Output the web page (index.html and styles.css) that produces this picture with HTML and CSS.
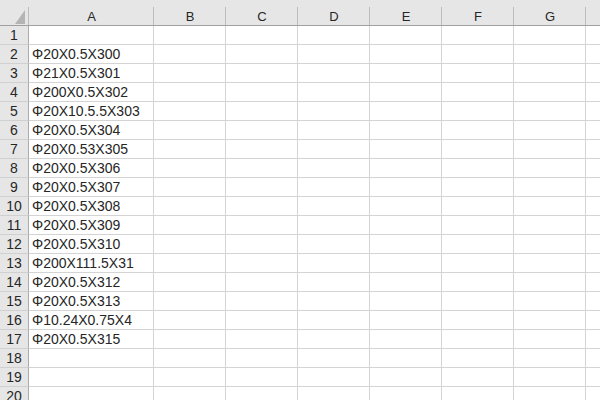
FILE: index.html
```html
<!DOCTYPE html>
<html>
<head>
<meta charset="utf-8">
<link rel="stylesheet" href="styles.css">
</head>
<body>
<div class="sheet">
  <div class="hrow">
    <div class="corner"><svg width="29" height="26" viewBox="0 0 29 26"><polygon points="25,10 25,24 15,24" fill="#b4b4b4"/></svg></div>
    <div class="ch a">A</div><div class="ch">B</div><div class="ch">C</div><div class="ch">D</div><div class="ch">E</div><div class="ch">F</div><div class="ch">G</div><div class="ch">H</div>
  </div>
  <div class="row"><div class="rh">1</div><div class="c a"></div><div class="c"></div><div class="c"></div><div class="c"></div><div class="c"></div><div class="c"></div><div class="c"></div><div class="c"></div></div>
  <div class="row"><div class="rh">2</div><div class="c a">Φ20X0.5X300</div><div class="c"></div><div class="c"></div><div class="c"></div><div class="c"></div><div class="c"></div><div class="c"></div><div class="c"></div></div>
  <div class="row"><div class="rh">3</div><div class="c a">Φ21X0.5X301</div><div class="c"></div><div class="c"></div><div class="c"></div><div class="c"></div><div class="c"></div><div class="c"></div><div class="c"></div></div>
  <div class="row"><div class="rh">4</div><div class="c a">Φ200X0.5X302</div><div class="c"></div><div class="c"></div><div class="c"></div><div class="c"></div><div class="c"></div><div class="c"></div><div class="c"></div></div>
  <div class="row"><div class="rh">5</div><div class="c a">Φ20X10.5.5X303</div><div class="c"></div><div class="c"></div><div class="c"></div><div class="c"></div><div class="c"></div><div class="c"></div><div class="c"></div></div>
  <div class="row"><div class="rh">6</div><div class="c a">Φ20X0.5X304</div><div class="c"></div><div class="c"></div><div class="c"></div><div class="c"></div><div class="c"></div><div class="c"></div><div class="c"></div></div>
  <div class="row"><div class="rh">7</div><div class="c a">Φ20X0.53X305</div><div class="c"></div><div class="c"></div><div class="c"></div><div class="c"></div><div class="c"></div><div class="c"></div><div class="c"></div></div>
  <div class="row"><div class="rh">8</div><div class="c a">Φ20X0.5X306</div><div class="c"></div><div class="c"></div><div class="c"></div><div class="c"></div><div class="c"></div><div class="c"></div><div class="c"></div></div>
  <div class="row"><div class="rh">9</div><div class="c a">Φ20X0.5X307</div><div class="c"></div><div class="c"></div><div class="c"></div><div class="c"></div><div class="c"></div><div class="c"></div><div class="c"></div></div>
  <div class="row"><div class="rh">10</div><div class="c a">Φ20X0.5X308</div><div class="c"></div><div class="c"></div><div class="c"></div><div class="c"></div><div class="c"></div><div class="c"></div><div class="c"></div></div>
  <div class="row"><div class="rh">11</div><div class="c a">Φ20X0.5X309</div><div class="c"></div><div class="c"></div><div class="c"></div><div class="c"></div><div class="c"></div><div class="c"></div><div class="c"></div></div>
  <div class="row"><div class="rh">12</div><div class="c a">Φ20X0.5X310</div><div class="c"></div><div class="c"></div><div class="c"></div><div class="c"></div><div class="c"></div><div class="c"></div><div class="c"></div></div>
  <div class="row"><div class="rh">13</div><div class="c a">Φ200X111.5X31</div><div class="c"></div><div class="c"></div><div class="c"></div><div class="c"></div><div class="c"></div><div class="c"></div><div class="c"></div></div>
  <div class="row"><div class="rh">14</div><div class="c a">Φ20X0.5X312</div><div class="c"></div><div class="c"></div><div class="c"></div><div class="c"></div><div class="c"></div><div class="c"></div><div class="c"></div></div>
  <div class="row"><div class="rh">15</div><div class="c a">Φ20X0.5X313</div><div class="c"></div><div class="c"></div><div class="c"></div><div class="c"></div><div class="c"></div><div class="c"></div><div class="c"></div></div>
  <div class="row"><div class="rh">16</div><div class="c a">Φ10.24X0.75X4</div><div class="c"></div><div class="c"></div><div class="c"></div><div class="c"></div><div class="c"></div><div class="c"></div><div class="c"></div></div>
  <div class="row"><div class="rh">17</div><div class="c a">Φ20X0.5X315</div><div class="c"></div><div class="c"></div><div class="c"></div><div class="c"></div><div class="c"></div><div class="c"></div><div class="c"></div></div>
  <div class="row"><div class="rh">18</div><div class="c a"></div><div class="c"></div><div class="c"></div><div class="c"></div><div class="c"></div><div class="c"></div><div class="c"></div><div class="c"></div></div>
  <div class="row"><div class="rh">19</div><div class="c a"></div><div class="c"></div><div class="c"></div><div class="c"></div><div class="c"></div><div class="c"></div><div class="c"></div><div class="c"></div></div>
  <div class="row"><div class="rh">20</div><div class="c a"></div><div class="c"></div><div class="c"></div><div class="c"></div><div class="c"></div><div class="c"></div><div class="c"></div><div class="c"></div></div>
</div>
</body>
</html>
```
FILE: styles.css
```css
html, body {
  margin: 0;
  padding: 0;
  width: 600px;
  height: 400px;
  overflow: hidden;
  background: #ffffff;
}
.sheet {
  font-family: "Liberation Sans", Arial, sans-serif;
  color: #262626;
  width: 700px;
}
.hrow {
  display: flex;
  height: 26px;
  background: #e6e6e6;
  border-bottom: 1px solid #a0a0a0;
  box-sizing: border-box;
}
.corner {
  width: 29px;
  flex: none;
  height: 25px;
  box-sizing: border-box;
  background: linear-gradient(#bdbdbd, #bdbdbd) right bottom / 1px 18px no-repeat;
}
.corner svg { display: block; }
.ch {
  width: 72px;
  flex: none;
  box-sizing: border-box;
  font-size: 13px;
  line-height: 18px;
  padding-top: 8px;
  text-align: center;
  background: linear-gradient(#bdbdbd, #bdbdbd) right bottom / 1px 18px no-repeat;
}
.ch.a, .c.a { width: 125px; }
.row {
  display: flex;
  height: 19px;
}
.rh {
  width: 29px;
  flex: none;
  box-sizing: border-box;
  background: #e6e6e6;
  border-right: 1px solid #ababab;
  border-bottom: 1px solid #d0d0d0;
  font-size: 14px;
  line-height: 18px;
  text-align: center;
}
.c {
  width: 72px;
  flex: none;
  box-sizing: border-box;
  border-right: 1px solid #d4d4d4;
  border-bottom: 1px solid #d4d4d4;
  font-size: 14px;
  line-height: 18px;
  padding-left: 3px;
  white-space: nowrap;
  overflow: hidden;
}
```
